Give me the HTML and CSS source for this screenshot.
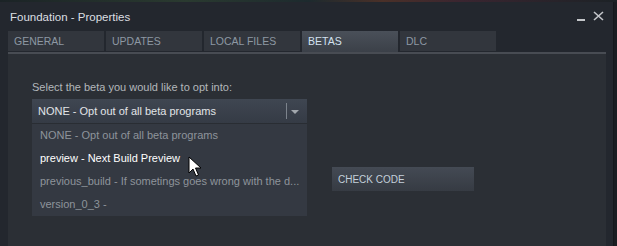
FILE: index.html
```html
<!DOCTYPE html>
<html lang="en">
<head>
  <meta charset="UTF-8" />
  <title>Foundation - Properties</title>
  <link rel="stylesheet" href="styles.css">
</head>
<body>
  <div class="desktop"></div>
  <div class="window">
    <div class="titlebar">
      <span class="title">Foundation - Properties</span>
      <div class="controls">
        <span class="min"></span>
        <svg class="close" width="11" height="10" viewBox="0 0 11 10">
          <path d="M1 1 L10 9 M10 1 L1 9" stroke="#c3c6ca" stroke-width="1.6" />
        </svg>
      </div>
    </div>

    <div class="tabs">
      <div class="tab">GENERAL</div>
      <div class="tab">UPDATES</div>
      <div class="tab">LOCAL FILES</div>
      <div class="tab active">BETAS</div>
      <div class="tab">DLC</div>
    </div>

    <div class="panel">
      <p class="label">Select the beta you would like to opt into:</p>
      <div class="row">
        <div class="select">
          <div class="select-box">
            <span>NONE - Opt out of all beta programs</span>
            <span class="sep"></span>
            <span class="arrow"></span>
          </div>
          <ul class="options">
            <li>NONE - Opt out of all beta programs</li>
            <li class="hover">preview - Next Build Preview</li>
            <li>previous_build - If sometings goes wrong with the d...</li>
            <li>version_0_3 -</li>
          </ul>
        </div>
        <button class="check">CHECK CODE</button>
      </div>
      <svg class="cursor" width="14" height="22" viewBox="0 0 14 22">
        <path d="M1 1 L1 17 L5 13 L8 20 L10.5 19 L7.5 12 L13 12 Z" fill="#fff" stroke="#000" stroke-width="1" />
      </svg>
    </div>
  </div>
</body>
</html>
```

FILE: styles.css
```css
* {
  margin: 0;
  padding: 0;
  box-sizing: border-box;
  font-family: 'Liberation Sans', Arial, sans-serif;
}

body {
  background: #1a1d22;
  width: 617px;
  height: 246px;
  overflow: hidden;
}

.desktop {
  height: 2px;
  background: linear-gradient(90deg, #1b2326, #2a3a30 30%, #1d2a2e 50%, #4a3028 62%, #3a2530 75%, #1c2226);
}

.window {
  width: 614px;
  height: 244px;
  background: #23272e;
  border-right: 1px solid #15181c;
  display: flex;
  flex-direction: column;
}

.titlebar {
  height: 29px;
  display: flex;
  align-items: center;
  justify-content: space-between;
  padding: 0 9px 0 10px;
}

.title {
  color: #dcdfe2;
  font-size: 11.5px;
}

.controls {
  display: flex;
  align-items: flex-end;
  gap: 8px;
  margin-top: -2px;
}

.min {
  width: 8px;
  height: 2px;
  background: #c3c6ca;
}

.tabs {
  display: flex;
  gap: 2px;
  margin-left: 8px;
  width: 598px;
  height: 23px;
  border-bottom: 2px solid #484c53;
  align-items: flex-start;
}

.tab {
  width: 96px;
  height: 20px;
  background: #32363d;
  color: #8d98a3;
  font-size: 10.5px;
  line-height: 20px;
  padding-left: 6px;
}

.tab.active {
  height: 21px;
  background: linear-gradient(#4a5059, #3b4048);
  color: #d3e1f0;
}

.panel {
  position: relative;
  margin-left: 8px;
  width: 598px;
  flex: 1;
  background: #2b2f35;
  padding: 26px 0 0 24px;
}

.label {
  color: #b3b7bb;
  font-size: 11px;
  line-height: 14px;
}

.row {
  display: flex;
  align-items: flex-start;
  gap: 25px;
  margin-top: 5px;
}

.select {
  width: 275px;
}

.select-box {
  height: 25px;
  display: flex;
  align-items: center;
  background: linear-gradient(#3f4651, #353b45);
  border-bottom: 1px solid #292d33;
  padding-left: 6px;
  color: #e2e5e8;
  font-size: 11px;
}

.select-box span:first-child {
  flex: 1;
}

.sep {
  width: 1px;
  height: 16px;
  background: #7c838c;
}

.arrow {
  width: 0;
  height: 0;
  margin: 2px 8px 0 4px;
  border-left: 4px solid transparent;
  border-right: 4px solid transparent;
  border-top: 4px solid #a2a7ad;
}

.options {
  list-style: none;
  background: #343942;
  padding: 0 0 0 8px;
}

.options li {
  height: 23px;
  line-height: 23px;
  color: #8e949b;
  font-size: 11px;
  white-space: nowrap;
}

.options li.hover {
  color: #ffffff;
}

.check {
  margin-top: 68px;
  width: 142px;
  height: 24px;
  border: none;
  background: linear-gradient(#444a54, #363b43);
  color: #c4d0dc;
  font-size: 10px;
  text-align: left;
  padding-left: 6px;
}

.cursor {
  position: absolute;
  left: 180px;
  top: 102px;
}
```
